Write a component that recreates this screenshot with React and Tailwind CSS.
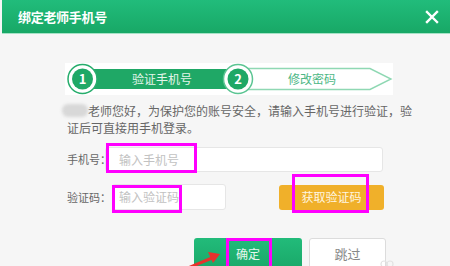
export default function App() {
  return (
    <div
      className="relative w-[450px] h-[266px] overflow-hidden bg-[#f6f6f6] text-[#666]"
      style={{ fontFamily: '"Noto Sans CJK SC", "Noto Sans", sans-serif' }}
    >
      {/* Header */}
      <div className="ml-[2px] h-[34px] flex items-center justify-between pl-[16px] pr-[6px] bg-gradient-to-b from-[#21bc7b] to-[#18a866] border-b border-[#a6e2c6]">
        <span className="text-white text-[13px] font-bold tracking-[-0.3px]">绑定老师手机号</span>
        <svg width="14" height="14" viewBox="0 0 14 14" className="mr-[5px]">
          <path d="M2 2 L12 12 M12 2 L2 12" stroke="#fff" strokeWidth="2.4" strokeLinecap="square" />
        </svg>
      </div>

      {/* Steps */}
      <div className="relative ml-[65px] mt-[29px] w-[328px] h-[32px] bg-white">
        <svg width="328" height="32" viewBox="0 0 328 32" className="absolute inset-0">
          <rect x="17" y="6" width="156" height="20" fill="#1fa866" />
          <path d="M173 5.5 H305 L326 16 L305 26.5 H173" fill="none" stroke="#8fd8b3" strokeWidth="1.4" />
          <circle cx="17.5" cy="16" r="14.5" fill="#fff" stroke="#26ad6c" strokeWidth="1.5" />
          <circle cx="17.5" cy="16" r="10.5" fill="#1fa866" />
          <circle cx="173" cy="16" r="14.5" fill="#fff" stroke="#5cc593" strokeWidth="1.5" />
          <circle cx="173" cy="16" r="10.5" fill="#1fa866" />
        </svg>
        <div className="relative flex items-center h-full text-[12px]">
          <span className="w-[35px] text-center text-white font-bold text-[13px]">1</span>
          <span className="w-[124px] text-center text-[#e3f5ea]">验证手机号</span>
          <span className="w-[28px] text-center text-white font-bold text-[13px]">2</span>
          <span className="w-[120px] text-center text-[#4db785]">修改密码</span>
        </div>
      </div>

      {/* Notice */}
      <div className="ml-[62px] mt-[7px] text-[12px] leading-[17px] text-[#666]">
        <div className="flex items-center">
          <span className="inline-block w-[26px] h-[13px] rounded-[6px] bg-[#d8d8d8] blur-[1.5px]"></span>
          <span>老师您好，为保护您的账号安全，请输入手机号进行验证，验</span>
        </div>
        <div className="pl-[5px]">证后可直接用手机登录。</div>
      </div>

      {/* Phone */}
      <div className="flex items-center ml-[67px] mt-[11px] h-[25px]">
        <span className="w-[38px] shrink-0 whitespace-nowrap text-[11px]">手机号：</span>
        <div className="relative w-[278px] h-[25px] bg-white border border-[#e6e6e6] rounded-[3px] flex items-center pl-[13px] text-[12px] text-[#c2c2c2]">
          输入手机号
        </div>
      </div>

      {/* Code */}
      <div className="flex items-center ml-[67px] mt-[12px] h-[26px]">
        <span className="w-[45px] shrink-0 whitespace-nowrap text-[11px]">验证码：</span>
        <div className="relative w-[114px] h-[26px] bg-white border border-[#e6e6e6] rounded-[3px] flex items-center pl-[6px] text-[12px] text-[#c2c2c2]">
          输入验证码
        </div>
        <div className="ml-[53px] w-[105px] h-[25px] rounded-[3px] bg-[#f0b02a] flex items-center justify-center text-[12px] text-[#fff6e0]">
          获取验证码
        </div>
      </div>

      {/* Actions */}
      <div className="flex ml-[194px] mt-[28px] gap-[7px]">
        <div className="w-[108px] h-[32px] rounded-[3px] bg-gradient-to-b from-[#22bb7a] to-[#19a868] flex items-center justify-center text-[12px] text-[#e6f7ee]">
          确定
        </div>
        <div className="w-[77px] h-[32px] rounded-[3px] bg-white border border-[#dcdcdc] flex items-center justify-center text-[13px] text-[#888]">
          跳过
        </div>
      </div>

      {/* Annotations */}
      <div className="absolute left-[106px] top-[143px] w-[91px] h-[30px] border-[3px] border-[#ff00ff]"></div>
      <div className="absolute left-[112px] top-[185px] w-[70px] h-[28px] border-[3px] border-[#ff00ff]"></div>
      <div className="absolute left-[292px] top-[174px] w-[77px] h-[39px] border-[3px] border-[#ff00ff]"></div>
      <div className="absolute left-[226px] top-[238px] w-[46px] h-[32px] border-[3px] border-[#ff00ff]"></div>
      <svg width="40" height="20" viewBox="0 0 40 20" className="absolute left-[186px] top-[249px]">
        <path d="M2 19 L26 9" stroke="#e8322c" strokeWidth="3" />
        <path d="M22 3 L34 5 L27 14 Z" fill="#e8322c" />
      </svg>
      <svg width="16" height="10" viewBox="0 0 16 10" className="absolute left-[380px] top-[258px]">
        <circle cx="4" cy="6" r="3" fill="none" stroke="#e2e2e2" strokeWidth="1.2" />
        <circle cx="10" cy="6" r="3" fill="none" stroke="#e2e2e2" strokeWidth="1.2" />
      </svg>
    </div>
  );
}
